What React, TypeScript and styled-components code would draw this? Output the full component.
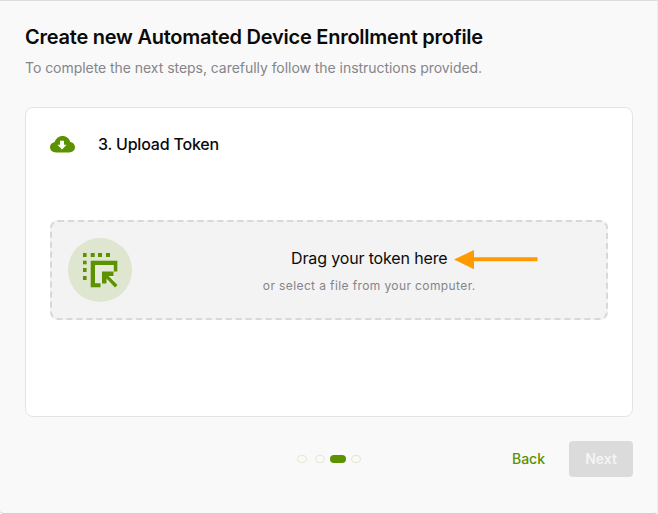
import React from "react";
import styled, { createGlobalStyle } from "styled-components";

const Global = createGlobalStyle`
  html, body { margin: 0; padding: 0; background: #f9f9f9; }
  body { font-family: Inter, "Liberation Sans", sans-serif; }
`;

const Modal = styled.div`
  box-sizing: border-box;
  width: 658px;
  height: 514px;
  background: #f9f9f9;
  border-top: 1px solid #dcdcdc;
  border-right: 1px solid #ececec;
  border-bottom: 1px solid #cfcfcf;
  border-radius: 0 0 4px 4px;
  padding: 22px 24px 36px 25px;
  display: flex;
  flex-direction: column;
`;

const Title = styled.h1`
  margin: 0;
  font-size: 20px;
  line-height: 28px;
  font-weight: 600;
  letter-spacing: -0.24px;
  color: #0a0a0a;
`;

const Subtitle = styled.p`
  margin: 6px 0 0;
  font-size: 14px;
  line-height: 22px;
  font-weight: 400;
  letter-spacing: -0.045px;
  color: #85858a;
`;

const Card = styled.section`
  box-sizing: border-box;
  margin-top: 28px;
  height: 310px;
  background: #fff;
  border: 1px solid #e4e4e4;
  border-radius: 8px;
  padding: 24px 24px 0;
`;

const StepHeader = styled.div`
  display: flex;
  align-items: center;
  gap: 23px;
  height: 24px;
`;

const StepTitle = styled.h2`
  margin: 0;
  font-size: 16px;
  line-height: 24px;
  font-weight: 500;
  letter-spacing: -0.2px;
  color: #0a0a0a;
`;

const Dropzone = styled.div`
  position: relative;
  box-sizing: border-box;
  margin-top: 64px;
  height: 100px;
  background: #f3f3f3;
  border: 2px dashed #d8d8d8;
  border-radius: 8px;
  padding: 16px;
  display: flex;
  align-items: center;
`;

const IconCircle = styled.div`
  flex: none;
  width: 64px;
  height: 64px;
  border-radius: 50%;
  background: #dee6d0;
  display: flex;
  align-items: center;
  justify-content: center;
`;

const DropText = styled.div`
  flex: 1;
  display: flex;
  flex-direction: column;
  align-items: center;
  padding-left: 16.5px;
`;

const DropTitle = styled.div`
  font-size: 16px;
  line-height: 24px;
  font-weight: 400;
  letter-spacing: -0.15px;
  color: #0a0a0a;
`;

const DropHint = styled.div`
  margin-top: 7px;
  font-size: 12px;
  line-height: 18px;
  letter-spacing: 0.39px;
  color: #85858a;
`;

const Arrow = styled.svg`
  position: absolute;
  left: 402px;
  top: 27px;
`;

const Footer = styled.footer`
  margin-top: 24px;
  height: 36px;
  display: flex;
  align-items: center;
  position: relative;
`;

const Pager = styled.div`
  position: absolute;
  left: 272px;
  top: 14px;
  display: flex;
  align-items: center;
`;

const Dot = styled.span<{ $active?: boolean; $gap: number }>`
  box-sizing: border-box;
  display: block;
  width: ${(p) => (p.$active ? 16 : 10)}px;
  height: 8px;
  margin-right: ${(p) => p.$gap}px;
  border-radius: 4px;
  background: ${(p) => (p.$active ? "#5c9100" : "transparent")};
  border: ${(p) => (p.$active ? "none" : "1px solid #e3e8d3")};
`;

const Actions = styled.div`
  margin-left: auto;
  display: flex;
  align-items: center;
  gap: 24px;
`;

const BackButton = styled.button`
  border: none;
  background: none;
  padding: 0;
  font: 500 14px/20px Inter, "Liberation Sans", sans-serif;
  color: #5c9100;
`;

const NextButton = styled.button`
  width: 64px;
  height: 36px;
  border: none;
  border-radius: 4px;
  background: #dbdbdb;
  font: 600 14px/20px Inter, "Liberation Sans", sans-serif;
  color: #f4f4f4;
`;

export default function App() {
  return (
    <>
      <Global />
      <Modal>
        <Title>Create new Automated Device Enrollment profile</Title>
        <Subtitle>To complete the next steps, carefully follow the instructions provided.</Subtitle>
        <Card>
          <StepHeader>
            <svg width="25" height="18" viewBox="0 0 25 18">
              <path
                d="M6 17.4C2.6 17.4 0 15.2 0 12.2C0 9.6 2 7.6 4.7 7.1C5.6 3.6 8.8 1 12.6 1C16.3 1 19.4 3.5 20.3 7C23 7.4 25 9.5 25 12.2C25 15.2 22.4 17.4 19 17.4Z"
                fill="#5c9100"
              />
              <path d="M10 5.7H14V9.7H16.6L12 14.4L7.4 9.7H10Z" fill="#fff" />
            </svg>
            <StepTitle>3. Upload Token</StepTitle>
          </StepHeader>
          <Dropzone>
            <IconCircle>
              <svg width="36" height="36" viewBox="0 0 36 36" fill="#5c9100">
                <rect x="12.7" y="12.7" width="19.5" height="18.8" fill="#e6ebdc" />
                <rect x="1" y="1" width="3.6" height="4" />
                <rect x="8.7" y="1" width="4" height="4" />
                <rect x="16" y="1" width="4" height="4" />
                <rect x="24" y="1" width="4" height="4" />
                <rect x="1" y="8.7" width="3.6" height="3.6" />
                <rect x="1" y="16" width="3.6" height="4" />
                <rect x="1" y="24" width="3.6" height="4" />
                <path d="M8.7 8.7H35.3V19.5H31.8V13H13V31.3H18.5V35.3H8.7Z" />
                <path d="M20 19.5H31.5V24H26.5L35.5 33L33 35.5L24.5 26.5V31.5H20Z" />
              </svg>
            </IconCircle>
            <DropText>
              <DropTitle>Drag your token here</DropTitle>
              <DropHint>or select a file from your computer.</DropHint>
            </DropText>
            <Arrow width="84" height="22" viewBox="0 0 84 22">
              <path d="M0 10.6L20 1V8.3H83.5V12.3H20V20.3Z" fill="#ff9a00" />
            </Arrow>
          </Dropzone>
        </Card>
        <Footer>
          <Pager>
            <Dot $gap={8} />
            <Dot $gap={5} />
            <Dot $gap={5} $active />
            <Dot $gap={0} />
          </Pager>
          <Actions>
            <BackButton>Back</BackButton>
            <NextButton>Next</NextButton>
          </Actions>
        </Footer>
      </Modal>
    </>
  );
}
